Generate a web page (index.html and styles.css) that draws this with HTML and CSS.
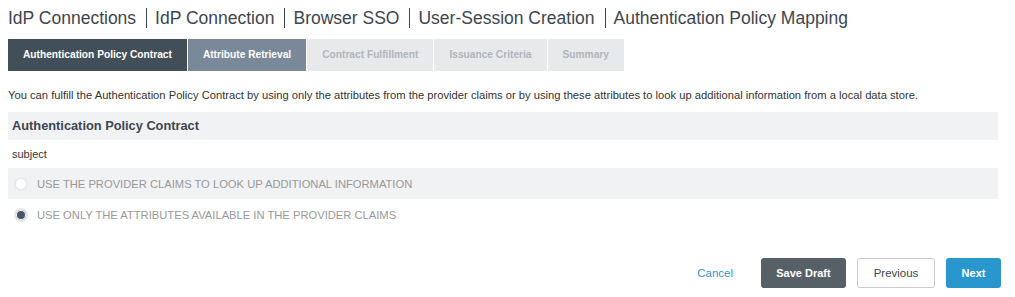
FILE: index.html
```html
<!DOCTYPE html>
<html lang="en">
<head>
  <meta charset="UTF-8">
  <title>Authentication Policy Mapping</title>
  <link rel="stylesheet" href="styles.css">
</head>
<body>
  <div class="crumbs">
    <span class="crumb">IdP Connections</span>
    <span class="crumb">IdP Connection</span>
    <span class="crumb">Browser SSO</span>
    <span class="crumb">User-Session Creation</span>
    <span class="crumb">Authentication Policy Mapping</span>
  </div>

  <div class="tabs">
    <div class="tab active">Authentication Policy Contract</div>
    <div class="tab next">Attribute Retrieval</div>
    <div class="tab">Contract Fulfillment</div>
    <div class="tab">Issuance Criteria</div>
    <div class="tab">Summary</div>
  </div>

  <p class="desc">You can fulfill the Authentication Policy Contract by using only the attributes from the provider claims or by using these attributes to look up additional information from a local data store.</p>

  <div class="panel-head">Authentication Policy Contract</div>
  <div class="panel-row">subject</div>

  <label class="radio-row shaded">
    <span class="radio"></span>
    USE THE PROVIDER CLAIMS TO LOOK UP ADDITIONAL INFORMATION
  </label>
  <label class="radio-row">
    <span class="radio checked"></span>
    USE ONLY THE ATTRIBUTES AVAILABLE IN THE PROVIDER CLAIMS
  </label>

  <div class="actions">
    <a class="cancel">Cancel</a>
    <button class="btn dark">Save Draft</button>
    <button class="btn plain">Previous</button>
    <button class="btn blue">Next</button>
  </div>
</body>
</html>
```

FILE: styles.css
```css
body {
  font-family: 'Liberation Sans', Arial, sans-serif;
  background: #fff;
  color: #333;
  margin: 0;
  padding: 7px 17px 0 8px;
}

.crumbs {
  display: flex;
  align-items: center;
  height: 22px;
  font-size: 17.5px;
  color: #3d4650;
}
.crumb {
  border-left: 1px solid #3d4650;
  padding: 0 10px 0 8px;
  line-height: 20px;
}
.crumb:first-child {
  border-left: none;
  padding-left: 0;
}

.tabs {
  display: flex;
  gap: 1px;
  margin-top: 10px;
}
.tab {
  height: 32px;
  line-height: 32px;
  padding: 0 15px;
  font-size: 10.2px;
  font-weight: bold;
  background: #e8e9eb;
  color: #b1b5ba;
}
.tab.active {
  background: #434f58;
  color: #fff;
}
.tab.next {
  background: #7a8999;
  color: #fff;
}

.desc {
  font-size: 11.2px;
  margin: 18px 0 11px;
  color: #333;
}

.panel-head {
  background: #f1f2f4;
  height: 28px;
  line-height: 28px;
  padding: 0 4px;
  font-size: 12.8px;
  font-weight: bold;
  color: #3d4650;
}
.panel-row {
  height: 28px;
  line-height: 28px;
  padding: 0 4px;
  font-size: 11px;
}

.radio-row {
  display: flex;
  align-items: center;
  gap: 9px;
  height: 31px;
  padding: 0 6px;
  font-size: 11.2px;
  color: #999;
}
.radio-row.shaded {
  background: #f1f2f4;
}
.radio {
  width: 14px;
  height: 14px;
  border-radius: 50%;
  background: #fff;
  border: 2px solid #e8e9eb;
  box-sizing: border-box;
}
.radio.checked {
  background: #465568;
  box-shadow: inset 0 0 0 1px #fff;
}

.actions {
  display: flex;
  justify-content: flex-end;
  align-items: center;
  gap: 11px;
  margin-top: 28px;
  margin-right: -3px;
}
.cancel {
  font-size: 11.5px;
  color: #2a97cf;
  margin-right: 17px;
}
.btn {
  height: 30px;
  font-family: inherit;
  font-size: 11px;
  font-weight: bold;
  border-radius: 3px;
  border: 1px solid transparent;
  padding: 0;
  white-space: nowrap;
}
.btn.dark {
  background: #575f67;
  color: #fff;
  width: 85px;
}
.btn.plain {
  background: #fff;
  border-color: #ccc;
  color: #3d4650;
  font-weight: normal;
  font-size: 11.5px;
  width: 78px;
}
.btn.blue {
  background: #2996cd;
  color: #fff;
  width: 55px;
}
```
